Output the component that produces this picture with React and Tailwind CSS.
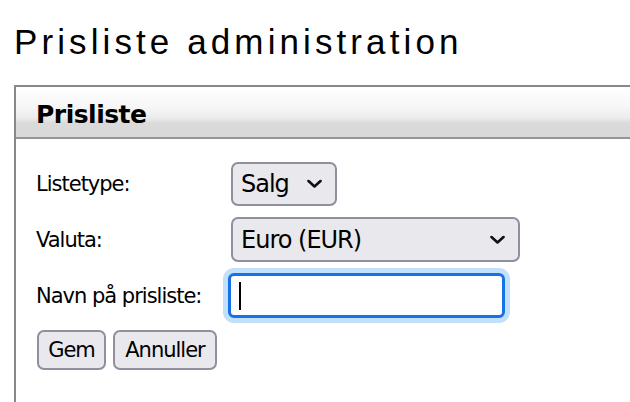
import React from 'react'

const label = "font-['DejaVu_Sans',sans-serif] text-[21px] leading-[24px] tracking-[-1px] text-black"

const Chevron = () => (
  <svg width="15" height="9" viewBox="0 0 15 9" className="pointer-events-none absolute right-[15px] top-1/2 -translate-y-1/2">
    <path d="M1.5 1.5 L7.5 7 L13.5 1.5" fill="none" stroke="#111" strokeWidth="2.6" strokeLinecap="round" strokeLinejoin="round" />
  </svg>
)

const Select = ({ width, height, options }) => (
  <div className={`relative ${width} ${height}`}>
    <select className="h-full w-full appearance-none rounded-[7px] border-2 border-[#8f8f9d] bg-[#e9e9ed] pl-[8px] font-['DejaVu_Sans',sans-serif] text-[24px] tracking-[-1px] text-black outline-none">
      {options.map((o) => (
        <option key={o}>{o}</option>
      ))}
    </select>
    <Chevron />
  </div>
)

const Button = ({ children, width }) => (
  <button className={`${width} h-[40px] rounded-[7px] border-2 border-[#8f8f9d] bg-[#e9e9ed] ${label}`}>
    {children}
  </button>
)

const App = () => {
  return (
    <div className="h-[402px] w-[630px] overflow-hidden bg-white pl-[14px]">
      <h1 className="pt-[24px] font-['Liberation_Sans',Arial,sans-serif] text-[35px] font-normal leading-[35px] tracking-[4.1px] text-black">
        Prisliste administration
      </h1>

      <div className="mt-[26px] w-[700px] border-l-2 border-t-2 border-[#888888]">
        <div className="flex h-[52px] items-center border-b-2 border-[#959595] bg-[linear-gradient(to_bottom,#ffffff_0%,#f6f6f6_40%,#ececec_62%,#dadada_72%,#d8d8d8_100%)] pl-[20px] pt-[6px]">
          <h2 className="font-['DejaVu_Sans',sans-serif] text-[25px] font-bold leading-[30px] tracking-[-0.5px] text-black">
            Prisliste
          </h2>
        </div>

        <div className="pl-[20px] pt-[23px] pb-[40px]">
          <div className="grid grid-cols-[195px_auto] items-center gap-y-[11px]">
            <label className={label}>Listetype:</label>
            <Select width="w-[106px]" height="h-[44px]" options={['Salg', 'Indkøb']} />

            <label className={label}>Valuta:</label>
            <Select width="w-[289px]" height="h-[45px]" options={['Euro (EUR)', 'Danske kroner (DKK)']} />

            <label className={label}>Navn på prisliste:</label>
            <div className="ml-[-3px] flex h-[45px] w-[277px] items-center rounded-[6px] border-[3px] border-[#1573e6] bg-white pl-[8px] ring-[5px] ring-[#c2e0fa]">
              <span className="h-[28px] w-[2px] bg-black" />
            </div>
          </div>

          <div className="ml-[1px] mt-[12px] flex gap-[7px]">
            <Button width="w-[69px]">Gem</Button>
            <Button width="w-[104px]">Annuller</Button>
          </div>
        </div>
      </div>
    </div>
  )
}

export default App
